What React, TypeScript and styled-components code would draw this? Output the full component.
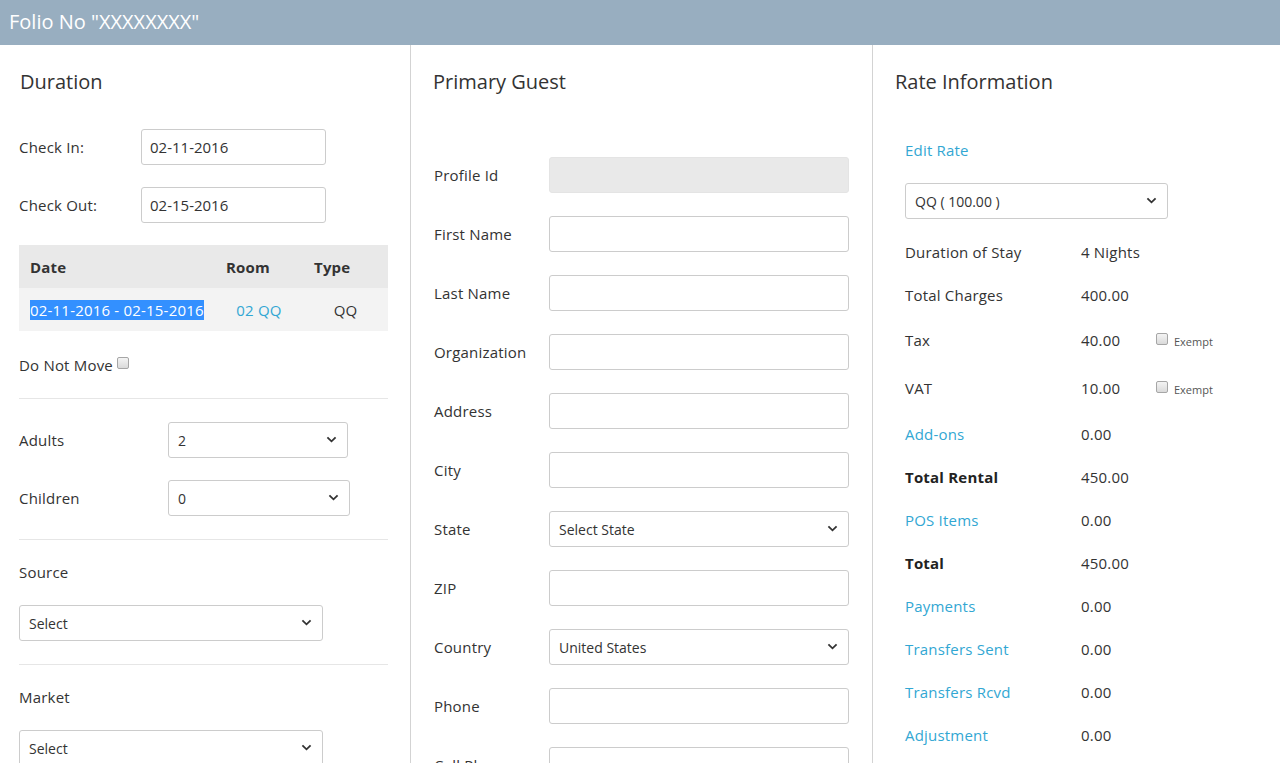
import React from 'react';
import styled, { createGlobalStyle } from 'styled-components';

const GlobalStyle = createGlobalStyle`
  body {
    margin: 0;
    font-family: "Open Sans", "Liberation Sans", sans-serif;
    font-size: 15px;
    letter-spacing: 0.2px;
    color: #333;
    background: #fff;
  }
  * { box-sizing: border-box; }
`;

const LINK = '#32a7d3';

const TopBar = styled.header`
  height: 45px;
  background: #98aec0;
  color: #fff;
  font-size: 20px;
  letter-spacing: 0;
  line-height: 43px;
  padding-left: 9px;
`;

const Columns = styled.div`
  display: grid;
  grid-template-columns: 410px 462px 1fr;
  min-height: calc(100vh - 45px);
`;

const Column = styled.section<{ $divided?: boolean }>`
  padding: 0 22px 0 ${p => (p.$divided ? 23 : 19)}px;
  border-left: ${p => (p.$divided ? '1px solid #d3d3d3' : 'none')};
`;

const Heading = styled.h2<{ $shift: number }>`
  margin: 26px 0 0 ${p => p.$shift}px;
  font-size: 20px;
  line-height: 22px;
  font-weight: 400;
  letter-spacing: 0;
  color: #333;
`;

const FieldRow = styled.div<{ $top: number; $label: number }>`
  display: flex;
  align-items: center;
  margin-top: ${p => p.$top}px;

  & > label {
    width: ${p => p.$label}px;
    flex-shrink: 0;
    line-height: 20px;
  }
`;

const TextInput = styled.input<{ $w: number }>`
  width: ${p => p.$w}px;
  height: 36px;
  border: 1px solid #ccc;
  border-radius: 3px;
  padding: 0 8px;
  font: 15px "Open Sans", "Liberation Sans", sans-serif;
  color: #333;
  background: #fff;

  &:read-only {
    background: #e9e9e9;
    border-color: #e4e4e4;
  }
`;

const SelectWrap = styled.div<{ $w: number; $top?: number }>`
  position: relative;
  width: ${p => p.$w}px;
  margin-top: ${p => p.$top ?? 0}px;
  flex-shrink: 0;

  select {
    appearance: none;
    width: 100%;
    height: 36px;
    border: 1px solid #ccc;
    border-radius: 3px;
    padding: 0 30px 0 9px;
    font: 14px "Open Sans", "Liberation Sans", sans-serif;
    color: #333;
    background: #fff;
  }

  svg {
    position: absolute;
    right: 11px;
    top: 14px;
    pointer-events: none;
  }
`;

const Chevron = () => (
  <svg width="11" height="7" viewBox="0 0 11 7">
    <path d="M1.4 1.3 L5.5 5.3 L9.6 1.3" fill="none" stroke="#333" strokeWidth="1.8" />
  </svg>
);

function Select({ w, top, value }: { w: number; top?: number; value: string }) {
  return (
    <SelectWrap $w={w} $top={top}>
      <select defaultValue={value}>
        <option>{value}</option>
      </select>
      <Chevron />
    </SelectWrap>
  );
}

const StayTable = styled.table`
  margin-top: 22px;
  width: 369px;
  border-collapse: collapse;

  th, td {
    height: 43px;
    padding: 0 11px;
    font-size: 15px;
  }
  th {
    background: #e9e9e9;
    text-align: left;
    font-weight: 700;
  }
  td {
    background: #f3f3f3;
    text-align: center;
  }
  td:first-child { text-align: left; }
`;

const Selected = styled.span`
  background: #3390ff;
  color: #fff;
`;

const Link = styled.a`
  color: ${LINK};
  text-decoration: none;
  cursor: pointer;
`;

const Box = styled.input.attrs({ type: 'checkbox' })`
  appearance: none;
  width: 12px;
  height: 12px;
  margin: 0;
  border: 1px solid #a6a6a6;
  border-radius: 2px;
  background: linear-gradient(#f4f4f4, #dadada);
`;

const CheckLine = styled.div`
  margin-top: 24px;
  line-height: 20px;
  display: flex;
  align-items: center;
  gap: 4px;

  ${Box} { margin-bottom: 4px; }
`;

const Divider = styled.hr`
  margin: 23px 0 0;
  border: 0;
  border-top: 1px solid #e6e6e6;
  width: 369px;
`;

const Caption = styled.div`
  margin-top: 22px;
  line-height: 20px;
`;

const Indented = styled.div`
  padding-left: 9px;
`;

const EditLine = styled.div`
  margin-top: 47px;
  line-height: 20px;
`;

const Totals = styled.div`
  margin-top: 11px;
`;

const TotalRow = styled.div<{ $h: number; $bold?: boolean }>`
  display: grid;
  grid-template-columns: 176px 75px auto;
  align-items: center;
  height: ${p => p.$h}px;
  line-height: 20px;

  & > span:first-child {
    font-weight: ${p => (p.$bold ? 700 : 400)};
    color: ${p => (p.$bold ? '#222' : '#333')};
  }
`;

const Exempt = styled.label`
  display: flex;
  align-items: center;
  gap: 6px;
  margin-top: 4px;
  font-size: 11px;
  letter-spacing: 0;
  color: #555;

  ${Box} { margin-top: -5px; }
`;

const guestFields: { label: string; kind: 'text' | 'readonly' | 'select'; value?: string }[] = [
  { label: 'Profile Id', kind: 'readonly' },
  { label: 'First Name', kind: 'text' },
  { label: 'Last Name', kind: 'text' },
  { label: 'Organization', kind: 'text' },
  { label: 'Address', kind: 'text' },
  { label: 'City', kind: 'text' },
  { label: 'State', kind: 'select', value: 'Select State' },
  { label: 'ZIP', kind: 'text' },
  { label: 'Country', kind: 'select', value: 'United States' },
  { label: 'Phone', kind: 'text' },
  { label: 'Cell Phone', kind: 'text' },
];

const totals: { label: string; value: string; link?: boolean; bold?: boolean; exempt?: boolean; h: number }[] = [
  { label: 'Duration of Stay', value: '4 Nights', h: 43 },
  { label: 'Total Charges', value: '400.00', h: 43 },
  { label: 'Tax', value: '40.00', exempt: true, h: 47 },
  { label: 'VAT', value: '10.00', exempt: true, h: 49 },
  { label: 'Add-ons', value: '0.00', link: true, h: 43 },
  { label: 'Total Rental', value: '450.00', bold: true, h: 43 },
  { label: 'POS Items', value: '0.00', link: true, h: 43 },
  { label: 'Total', value: '450.00', bold: true, h: 43 },
  { label: 'Payments', value: '0.00', link: true, h: 43 },
  { label: 'Transfers Sent', value: '0.00', link: true, h: 43 },
  { label: 'Transfers Rcvd', value: '0.00', link: true, h: 43 },
  { label: 'Adjustment', value: '0.00', link: true, h: 43 },
];

export default function App() {
  return (
    <>
      <GlobalStyle />
      <TopBar>Folio No "XXXXXXXX"</TopBar>
      <Columns>
        <Column>
          <Heading $shift={1}>Duration</Heading>
          <FieldRow $top={36} $label={122}>
            <label>Check In:</label>
            <TextInput $w={185} defaultValue="02-11-2016" />
          </FieldRow>
          <FieldRow $top={22} $label={122}>
            <label>Check Out:</label>
            <TextInput $w={185} defaultValue="02-15-2016" />
          </FieldRow>
          <StayTable>
            <colgroup>
              <col style={{ width: 196 }} />
              <col style={{ width: 88 }} />
              <col style={{ width: 85 }} />
            </colgroup>
            <thead>
              <tr><th>Date</th><th>Room</th><th>Type</th></tr>
            </thead>
            <tbody>
              <tr>
                <td><Selected>02-11-2016 - 02-15-2016</Selected></td>
                <td><Link>02 QQ</Link></td>
                <td>QQ</td>
              </tr>
            </tbody>
          </StayTable>
          <CheckLine>Do Not Move <Box /></CheckLine>
          <Divider />
          <FieldRow $top={23} $label={149}>
            <label>Adults</label>
            <Select w={180} value="2" />
          </FieldRow>
          <FieldRow $top={22} $label={149}>
            <label>Children</label>
            <Select w={182} value="0" />
          </FieldRow>
          <Divider />
          <Caption>Source</Caption>
          <Select w={304} top={23} value="Select" />
          <Divider />
          <Caption>Market</Caption>
          <Select w={304} top={23} value="Select" />
        </Column>

        <Column $divided>
          <Heading $shift={-1}>Primary Guest</Heading>
          {guestFields.map((f, i) => (
            <FieldRow key={f.label} $top={i === 0 ? 64 : 23} $label={115}>
              <label>{f.label}</label>
              {f.kind === 'select' ? (
                <Select w={300} value={f.value ?? ''} />
              ) : (
                <TextInput $w={300} readOnly={f.kind === 'readonly'} />
              )}
            </FieldRow>
          ))}
        </Column>

        <Column $divided>
          <Heading $shift={-1}>Rate Information</Heading>
          <Indented>
            <EditLine><Link>Edit Rate</Link></EditLine>
            <Select w={263} top={23} value="QQ ( 100.00 )" />
            <Totals>
              {totals.map(t => (
                <TotalRow key={t.label} $h={t.h} $bold={t.bold}>
                  <span>{t.link ? <Link>{t.label}</Link> : t.label}</span>
                  <span>{t.value}</span>
                  {t.exempt ? (
                    <Exempt><Box /> Exempt</Exempt>
                  ) : <span />}
                </TotalRow>
              ))}
            </Totals>
          </Indented>
        </Column>
      </Columns>
    </>
  );
}
